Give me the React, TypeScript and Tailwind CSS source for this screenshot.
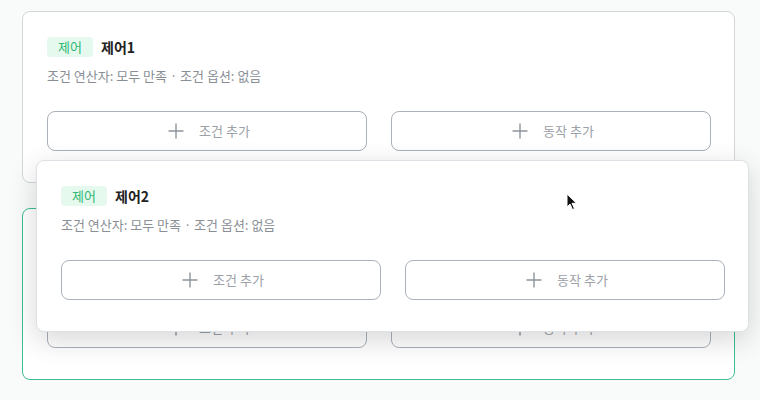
import React from 'react';
import { Plus } from 'lucide-react';

const font = { fontFamily: '"Noto Sans CJK KR", "Noto Sans", sans-serif' };

type CardProps = { name: string; className?: string };

const AddButton = ({ label }: { label: string }) => (
  <button className="flex h-10 items-center justify-center gap-[11px] rounded-lg border border-[#aab1bb] bg-white text-[13px] text-[#9ca1a8]">
    <Plus className="h-6 w-6 text-[#8d949d]" strokeWidth={1.4} />
    <span>{label}</span>
  </button>
);

const ControlCard = ({ name, className = '' }: CardProps) => (
  <div className={`w-[713px] h-[172px] rounded-lg bg-white px-6 pt-[25px] ${className}`}>
    {/* Header */}
    <div className="flex items-center gap-2 h-5">
      <span className="flex h-5 w-[46px] items-center justify-center rounded bg-[#e5f9ee] text-[13px] text-[#2fb873]">
        제어
      </span>
      <span className="text-[14px] font-bold text-[#222]">{name}</span>
    </div>
    <p className="mt-[9px] text-[13px] leading-5 text-[#8a8f96]">
      조건 연산자: 모두 만족 · 조건 옵션: 없음
    </p>

    {/* Actions */}
    <div className="mt-[25px] grid grid-cols-[320px_320px] gap-6">
      <AddButton label="조건 추가" />
      <AddButton label="동작 추가" />
    </div>
  </div>
);

const App = () => {
  return (
    <div className="relative h-[400px] w-[760px] overflow-hidden bg-[#f9fafa]" style={font}>
      <div className="flex flex-col gap-[25px] pl-[22px] pt-[11px]">
        <ControlCard name="제어1" className="border border-[#d3d7dc]" />
        <ControlCard name="제어2" className="border border-[#3cc08e]" />
      </div>

      {/* Drag overlay */}
      <div className="absolute left-[36px] top-[160px]">
        <ControlCard
          name="제어2"
          className="w-[712px] h-[171px] pt-[24px] border border-[#dde0e4] shadow-[0_8px_28px_rgba(0,0,0,0.16)]"
        />
      </div>

      {/* Cursor */}
      <svg className="absolute left-[566px] top-[193px]" width="12" height="18" viewBox="0 0 12 18">
        <path d="M1 1 L1 14 L4 11 L6.5 16.5 L8.5 15.6 L6 10.3 L10.5 10.3 Z" fill="#111" stroke="#fff" strokeWidth="1" />
      </svg>
    </div>
  );
};

export default App;
